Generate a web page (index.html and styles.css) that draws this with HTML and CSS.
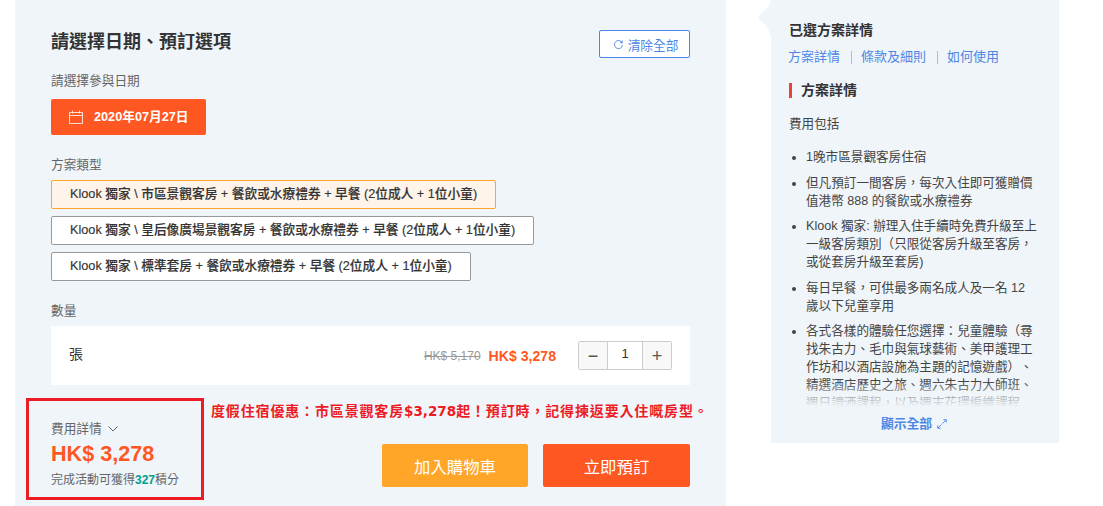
FILE: index.html
```html
<!DOCTYPE html>
<html lang="zh-Hant">
<head>
<meta charset="utf-8">
<title>請選擇日期、預訂選項</title>
<link rel="stylesheet" href="styles.css">
</head>
<body>
<div class="page">
  <main class="panel">
    <header class="panel-head">
      <h2 class="title">請選擇日期、預訂選項</h2>
      <button class="clear">
        <svg class="clear-icon" viewBox="0 0 12 12" width="11" height="11"><path d="M9.9 4A4.4 4.4 0 1 0 10.4 6.5" fill="none" stroke="#4d87e5" stroke-width="1"/><path d="M10.6 1.4V4.6H7.4z" fill="#4d87e5"/></svg>
        <span>清除全部</span>
      </button>
    </header>
    <div class="label label-date">請選擇參與日期</div>
    <button class="date">
      <svg viewBox="0 0 14 14" width="14" height="14"><path d="M.5 2.500h13v11H.5zM.5 5.500h13M3.500 .5v3M10.500 .5v3" fill="none" stroke="#fff" stroke-width="1" opacity=".8"/></svg>
      <span class="date-text">2020年07月27日</span>
    </button>
    <div class="label label-type">方案類型</div>
    <div class="options">
      <div class="option selected">Klook 獨家 \ 市區景觀客房 + 餐飲或水療禮券 + 早餐 (2位成人 + 1位小童)</div>
      <div class="option">Klook 獨家 \ 皇后像廣場景觀客房 + 餐飲或水療禮券 + 早餐 (2位成人 + 1位小童)</div>
      <div class="option">Klook 獨家 \ 標準套房 + 餐飲或水療禮券 + 早餐 (2位成人 + 1位小童)</div>
    </div>
    <div class="label label-qty">數量</div>
    <div class="qty-row">
      <span class="unit">張</span>
      <span class="was">HK$ 5,170</span>
      <span class="now">HK$ 3,278</span>
      <div class="stepper">
        <button class="step">−</button>
        <span class="count">1</span>
        <button class="step">+</button>
      </div>
    </div>
    <footer class="foot">
      <div class="total">
        <div class="fee">費用詳情
          <svg viewBox="0 0 10 6" width="10" height="6"><path d="M.5 .5 5 5 9.500 .5" fill="none" stroke="#666" stroke-width="1"/></svg>
        </div>
        <div class="sum">HK$ 3,278</div>
        <div class="points">完成活動可獲得<b>327</b>積分</div>
      </div>
      <div class="actions">
        <button class="cta cart">加入購物車</button>
        <button class="cta book">立即預訂</button>
      </div>
    </footer>
  </main>
  <aside class="side">
    <svg class="notch" viewBox="0 0 13 38" width="13" height="38"><path d="M13 0Q12 5 9 8L1.500 15.500Q-.5 18 1.500 20Q11 26 13 38z" fill="#f0f5fa"/></svg>
    <h3 class="side-title">已選方案詳情</h3>
    <nav class="tabs"><a>方案詳情</a><a>條款及細則</a><a>如何使用</a></nav>
    <h4 class="sub">方案詳情</h4>
    <div class="detail">
      <p class="incl">費用包括</p>
      <ul class="list">
        <li>1晚市區景觀客房住宿</li>
        <li>但凡預訂一間客房，每次入住即可獲贈價值港幣 888 的餐飲或水療禮券</li>
        <li>Klook 獨家: 辦理入住手續時免費升級至上一級客房類別（只限從客房升級至客房，或從套房升級至套房)</li>
        <li>每日早餐，可供最多兩名成人及一名 12 歲以下兒童享用</li>
        <li>各式各樣的體驗任您選擇：兒童體驗（尋找朱古力、毛巾與氣球藝術、美甲護理工作坊和以酒店設施為主題的記憶遊戲）、精選酒店歷史之旅、週六朱古力大師班、週日調酒課程，以及週末花環編織課程</li>
      </ul>
    </div>
    <a class="more">顯示全部
      <svg viewBox="0 0 11 11" width="10" height="10"><path d="M6 5 10 1M7 .8h3.200V4M5 6 1 10M.8 7v3.200H4" fill="none" stroke="#4d87e5" stroke-width="1"/></svg>
    </a>
  </aside>
  <div class="mark-box"></div>
  <div class="mark-text">度假住宿優惠：市區景觀客房<span class="mark-num">$3,278</span>起！預訂時，記得揀返要入住嘅房型。</div>
</div>
</body>
</html>
```
FILE: styles.css
```css
* { box-sizing: border-box; }
html, body { margin: 0; height: 100%; overflow: hidden; background: #fff; }
body { font-family: "Liberation Sans", "Noto Sans CJK SC", sans-serif; color: #333; text-spacing-trim: space-all; }
button { font-family: inherit; }
.page { position: relative; display: flex; align-items: flex-start; width: 1103px; height: 506px; padding-left: 15px; }

.panel { width: 711px; height: 506px; background: #f0f5fa; padding: 30px 36px 0; flex: none; }
.panel-head { display: flex; justify-content: space-between; align-items: flex-start; height: 28px; }
.title { margin: 0; font-size: 18px; line-height: 24px; font-weight: 700; color: #333; }
.clear { width: 91px; height: 28px; padding: 0 0 0 2px; display: flex; align-items: center; justify-content: center; gap: 4px; background: #fff; border: 1px solid #4d87e5; border-radius: 2px; color: #4d87e5; font-size: 12.700px; }
.clear-icon { flex: none; }
.label { font-size: 12.700px; line-height: 18px; color: #666; }
.label-date { margin-top: 14px; }
.date { margin-top: 9px; width: 155px; height: 36px; padding: 0 0 0 18px; display: flex; align-items: center; gap: 11px; background: #ff5722; border: 0; border-radius: 2px; color: #fff; font-size: 12.700px; font-weight: 700; }
.date-text { margin-top: -3px; }
.label-type { margin-top: 21px; }
.options { display: flex; flex-direction: column; align-items: flex-start; gap: 7px; margin-top: 6px; }
.option { height: 29px; line-height: 27px; padding: 0 18px; border: 1px solid #999; border-radius: 2px; background: #fff; font-size: 12.700px; font-weight: 500; -webkit-text-stroke: .15px #333; white-space: nowrap; color: #333; }
.option.selected { border-color: #ffa628; background: #fff4e9; }
.label-qty { margin-top: 21px; }
.qty-row { margin-top: 6px; height: 59px; background: #fff; display: flex; align-items: center; padding: 0 18px; }
.unit { font-size: 14px; line-height: 18px; margin: -3px auto 0 0; color: #333; }
.was { font-size: 12px; color: #999; text-decoration: line-through; margin-right: 8px; }
.now { font-size: 14.100px; font-weight: 700; color: #ff5722; margin-right: 22px; }
.stepper { display: flex; width: 94px; height: 29px; border: 1px solid #ccc; border-radius: 2px; background: #fff; }
.step { width: 28px; padding: 0; border: 0; background: #f8f8f8; font-size: 18px; line-height: 24px; color: #555; }
.count { flex: 1; text-align: center; font-size: 13px; line-height: 24px; border: solid #ccc; border-width: 0 1px; color: #333; }

.foot { display: flex; justify-content: space-between; margin-top: 35px; }
.fee { display: flex; align-items: center; gap: 6px; font-size: 12.700px; line-height: 18px; color: #666; }
.sum { font-size: 21.600px; line-height: 26px; font-weight: 700; color: #ff5722; margin-top: 3px; }
.points { font-size: 12px; line-height: 16px; color: #666; margin-top: 5px; }
.points b { font-weight: 700; color: #00a08a; }
.actions { display: flex; gap: 15px; margin-top: 24px; }
.cta { width: 146px; height: 43px; padding: 0; border: 0; border-radius: 2px; color: #fff; font-size: 16.400px; }
.cart { background: #ffa628; }
.book { width: 147px; background: #ff5722; }

.side { position: relative; margin-left: 45px; width: 288px; height: 443px; background: #f0f5fa; padding: 22px 18px 0; flex: none; }
.notch { position: absolute; left: -13px; top: 0; }
.side-title { margin: 0; font-size: 14px; line-height: 17px; font-weight: 700; color: #333; }
.tabs { display: flex; gap: 21px; margin: 9px 0 0 -1px; font-size: 13px; line-height: 18px; color: #4d87e5; }
.tabs a { position: relative; }
.tabs a + a::before { content: ""; position: absolute; left: -10px; top: 3px; height: 13px; border-left: 1px solid #bbb; }
.sub { margin: 17px 0 0; height: 15px; border-left: 3px solid #e64340; padding-left: 9px; font-size: 14px; line-height: 15px; font-weight: 700; color: #333; }
.detail { position: relative; height: 291px; overflow: hidden; margin-top: 18px; font-size: 12.600px; line-height: 18px; color: #444; }
.detail::after { content: ""; position: absolute; left: 0; right: 0; bottom: 0; height: 26px; background: linear-gradient(rgba(240,245,250,0), #f0f5fa); }
.incl { margin: 0; line-height: 16px; }
.list { margin: 16px 0 0; padding: 0 0 0 17px; }
.list li { margin-bottom: 7.500px; }
.more { display: flex; align-items: center; justify-content: center; gap: 5px; margin: 9px 0 0 -2px; font-size: 12.800px; font-weight: 700; line-height: 16px; color: #4d87e5; }

.mark-box { position: absolute; left: 26px; top: 398px; width: 178px; height: 102px; border: 3px solid #ed1c24; }
.mark-text { position: absolute; left: 211px; top: 401px; font-size: 14px; line-height: 20px; letter-spacing: .85px; font-weight: 700; color: #ed1c24; white-space: nowrap; font-family: "DejaVu Sans", "Noto Sans CJK TC", sans-serif; }
.mark-num { font-size: 13.500px; letter-spacing: 0; }
```
